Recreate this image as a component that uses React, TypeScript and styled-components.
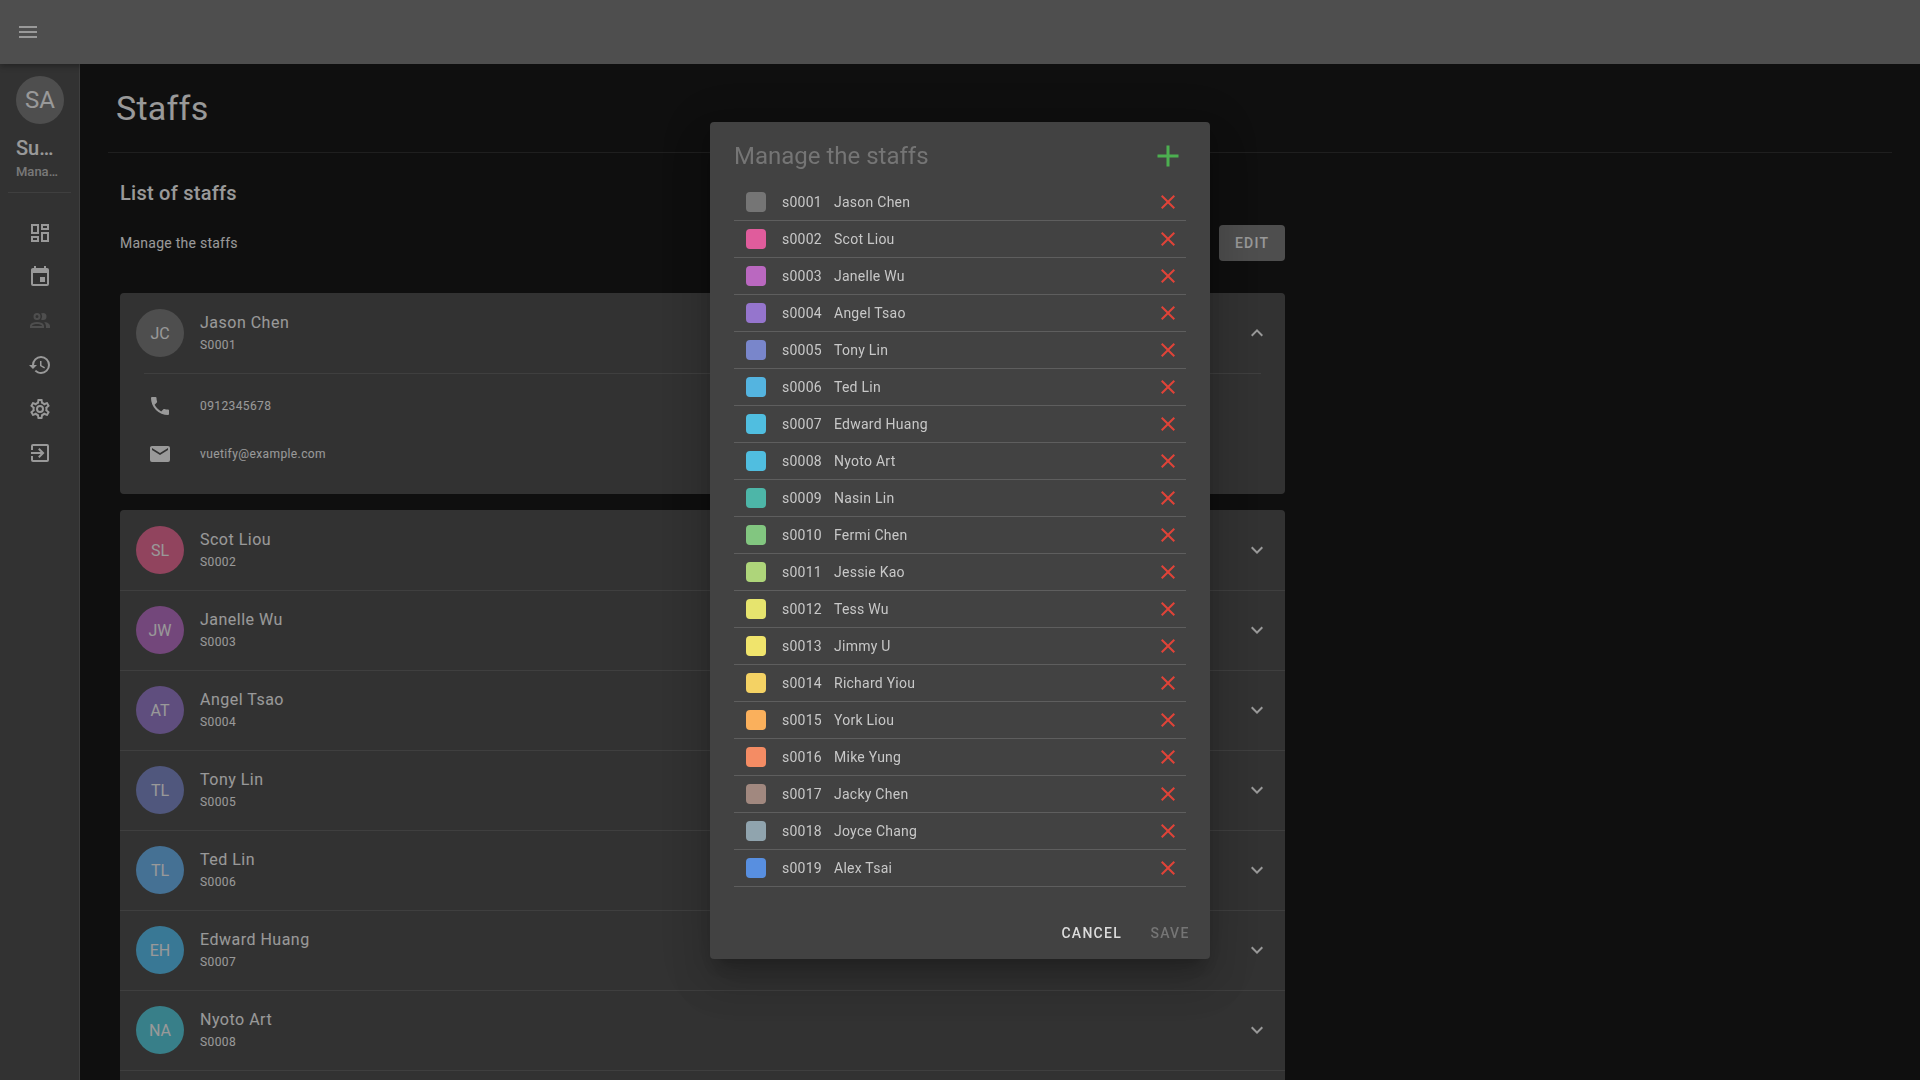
import React from "react";
import styled, { createGlobalStyle } from "styled-components";

const GlobalStyle = createGlobalStyle`
  *, *::before, *::after { box-sizing: border-box; }
  body {
    margin: 0;
    background: #000;
    color: #fff;
    font-family: Roboto, "Noto Sans", sans-serif;
    font-size: 16px;
    line-height: 24px;
  }
  h1, h2, h3, p, ul { margin: 0; padding: 0; }
  ul { list-style: none; }
  button { font-family: inherit; border: 0; background: none; padding: 0; color: inherit; cursor: pointer; }
  a { color: inherit; text-decoration: none; }
`;

const ICONS = {
  menu: "M3 6h18v2H3V6m0 5h18v2H3v-2m0 5h18v2H3v-2z",
  dashboard:
    "M19 5v2h-4V5h4M9 5v6H5V5h4m10 8v6h-4v-6h4M9 17v2H5v-2h4M21 3h-8v6h8V3M11 3H3v10h8V3m10 8h-8v10h8V11m-10 4H3v6h8v-6z",
  calendar:
    "M19 19H5V8h14m-3-7v2H8V1H6v2H5c-1.11 0-2 .89-2 2v14a2 2 0 0 0 2 2h14a2 2 0 0 0 2-2V5a2 2 0 0 0-2-2h-1V1m-1 11h-5v5h5v-5z",
  people:
    "M13.07 10.41a5 5 0 0 0 0-5.82A3.39 3.39 0 0 1 15 4a3.5 3.5 0 0 1 0 7 3.39 3.39 0 0 1-1.93-.59M5.5 7.5A3.5 3.5 0 1 1 9 11a3.5 3.5 0 0 1-3.5-3.5m2 0A1.5 1.5 0 1 0 9 6a1.5 1.5 0 0 0-1.5 1.5M16 17v2H2v-2s0-4 7-4 7 4 7 4m-2 0c-.14-.78-1.33-2-5-2s-4.93 1.31-5 2m11.95-4A5.32 5.32 0 0 1 18 17v2h4v-2s0-3.63-6.06-4z",
  history:
    "M13.5 8H12v5l4.28 2.54.72-1.21-3.5-2.08V8M13 3a9 9 0 0 0-9 9H1l3.96 4.03L9 12H6a7 7 0 0 1 7-7 7 7 0 0 1 7 7 7 7 0 0 1-7 7c-1.93 0-3.68-.79-4.94-2.06l-1.42 1.42A8.896 8.896 0 0 0 13 21a9 9 0 0 0 9-9 9 9 0 0 0-9-9",
  cog: "M12,8A4,4 0 0,1 16,12A4,4 0 0,1 12,16A4,4 0 0,1 8,12A4,4 0 0,1 12,8M12,10A2,2 0 0,0 10,12A2,2 0 0,0 12,14A2,2 0 0,0 14,12A2,2 0 0,0 12,10M10,22C9.75,22 9.54,21.82 9.5,21.58L9.13,18.93C8.5,18.68 7.96,18.34 7.44,17.94L4.95,18.95C4.73,19.03 4.46,18.95 4.34,18.73L2.34,15.27C2.21,15.05 2.27,14.78 2.46,14.63L4.57,12.97L4.5,12L4.57,11L2.46,9.37C2.27,9.22 2.21,8.95 2.34,8.73L4.34,5.27C4.46,5.05 4.73,4.96 4.95,5.05L7.44,6.05C7.96,5.66 8.5,5.32 9.13,5.07L9.5,2.42C9.54,2.18 9.75,2 10,2H14C14.25,2 14.46,2.18 14.5,2.42L14.87,5.07C15.5,5.32 16.04,5.66 16.56,6.05L19.05,5.05C19.27,4.96 19.54,5.05 19.66,5.27L21.66,8.73C21.79,8.95 21.73,9.22 21.54,9.37L19.43,11L19.5,12L19.43,13L21.54,14.63C21.73,14.78 21.79,15.05 21.66,15.27L19.66,18.73C19.54,18.95 19.27,19.04 19.05,18.95L16.56,17.95C16.04,18.34 15.5,18.68 14.87,18.93L14.5,21.58C14.46,21.82 14.25,22 14,22H10M11.25,4L10.88,6.61C9.68,6.86 8.62,7.5 7.85,8.39L5.44,7.35L4.69,8.65L6.8,10.2C6.4,11.37 6.4,12.64 6.8,13.8L4.68,15.36L5.43,16.66L7.86,15.62C8.63,16.5 9.68,17.14 10.87,17.38L11.24,20H12.76L13.13,17.39C14.32,17.14 15.37,16.5 16.14,15.62L18.57,16.66L19.32,15.36L17.2,13.81C17.6,12.64 17.6,11.37 17.2,10.2L19.31,8.65L18.56,7.35L16.15,8.39C15.38,7.5 14.32,6.86 13.12,6.62L12.75,4H11.25Z",
  exit: "M19 3H5a2 2 0 0 0-2 2v4h2V5h14v14H5v-4H3v4a2 2 0 0 0 2 2h14a2 2 0 0 0 2-2V5a2 2 0 0 0-2-2m-8.92 12.58L11.5 17l5-5-5-5-1.42 1.41L12.67 11H3v2h9.67z",
  phone:
    "M6.62 10.79c1.44 2.83 3.76 5.15 6.59 6.59l2.2-2.2c.28-.28.67-.36 1.02-.25 1.12.37 2.32.57 3.57.57a1 1 0 0 1 1 1V20a1 1 0 0 1-1 1A17 17 0 0 1 3 4a1 1 0 0 1 1-1h3.5a1 1 0 0 1 1 1c0 1.25.2 2.45.57 3.57.11.35.03.74-.25 1.02l-2.2 2.2z",
  email:
    "M20 8l-8 5-8-5V6l8 5 8-5m0-2H4c-1.11 0-2 .89-2 2v12a2 2 0 0 0 2 2h16a2 2 0 0 0 2-2V6a2 2 0 0 0-2-2z",
  up: "M7.41 15.41L12 10.83l4.59 4.58L18 14l-6-6-6 6 1.41 1.41z",
  down: "M7.41 8.58L12 13.17l4.59-4.59L18 10l-6 6-6-6 1.41-1.42z",
  plus: "M19 13h-6v6h-2v-6H5v-2h6V5h2v6h6v2z",
  close:
    "M19 6.41L17.59 5 12 10.59 6.41 5 5 6.41 10.59 12 5 17.59 6.41 19 12 13.41 17.59 19 19 17.59 13.41 12 19 6.41z",
};

type IconName = keyof typeof ICONS;

const Svg = styled.svg<{ $size: number }>`
  display: block;
  flex: none;
  width: ${(p) => p.$size}px;
  height: ${(p) => p.$size}px;
  fill: currentColor;
`;

const Icon = ({ name, size = 24 }: { name: IconName; size?: number }) => (
  <Svg viewBox="0 0 24 24" $size={size} aria-hidden="true">
    <path d={ICONS[name]} />
  </Svg>
);

const Screen = styled.div`
  display: flex;
  flex-direction: column;
  height: 100vh;
`;

const AppBar = styled.header`
  display: flex;
  align-items: center;
  flex: none;
  height: 64px;
  padding: 0 16px;
  background: #757575;
  box-shadow: 0 2px 4px -1px rgba(0, 0, 0, 0.2), 0 4px 5px rgba(0, 0, 0, 0.14),
    0 1px 10px rgba(0, 0, 0, 0.12);
  z-index: 1;
`;

const Body = styled.div`
  display: flex;
  flex: 1;
  min-height: 0;
`;

const Rail = styled.nav`
  flex: none;
  width: 80px;
  padding-top: 12px;
  background: #424242;
  border-right: 1px solid #5a5a5a;
`;

const Profile = styled.div`
  display: flex;
  flex-direction: column;
  padding: 0 16px;
`;

const RailDivider = styled.hr`
  height: 1px;
  margin: 10px 8px 18px;
  border: 0;
  background: #5a5a5a;
`;

const Clipped = styled.span<{ $lead?: boolean }>`
  overflow: hidden;
  text-overflow: ellipsis;
  white-space: nowrap;
  font-size: ${(p) => (p.$lead ? 20 : 13)}px;
  font-weight: 500;
  line-height: ${(p) => (p.$lead ? 24 : 20)}px;
  margin-top: ${(p) => (p.$lead ? 12 : 2)}px;
  color: ${(p) => (p.$lead ? "#fff" : "rgba(255,255,255,0.7)")};
`;

const Avatar = styled.span<{ $color: string; $large?: boolean }>`
  display: flex;
  align-items: center;
  justify-content: center;
  flex: none;
  width: 48px;
  height: 48px;
  border-radius: 50%;
  background: ${(p) => p.$color};
  font-size: ${(p) => (p.$large ? 24 : 16)}px;
`;

const NavLink = styled.a<{ $active?: boolean }>`
  display: flex;
  align-items: center;
  justify-content: center;
  height: 44px;
  color: ${(p) => (p.$active ? "#757575" : "#fff")};
`;

const Main = styled.main`
  flex: 1;
  min-width: 0;
  padding: 12px 28px;
  overflow-y: auto;
  scrollbar-width: none;
`;

const PageTitle = styled.h1`
  padding: 12px 8px 24px;
  border-bottom: 1px solid rgba(255, 255, 255, 0.12);
  font-size: 34px;
  font-weight: 400;
  line-height: 40px;
  letter-spacing: 0.007em;
`;

const Column = styled.section`
  width: 66.6667%;
  padding: 24px 12px;
`;

const SectionTitle = styled.h2`
  font-size: 20px;
  font-weight: 500;
  line-height: 32px;
  letter-spacing: 0.0125em;
`;

const SectionBar = styled.div`
  display: flex;
  align-items: center;
  justify-content: space-between;
  margin: 16px 0 32px;
  font-size: 14px;
  letter-spacing: 0.018em;
`;

const EditButton = styled.button`
  height: 36px;
  padding: 0 16px;
  border-radius: 4px;
  background: #757575;
  font-size: 14px;
  font-weight: 500;
  letter-spacing: 0.09em;
`;

const Card = styled.div`
  background: #424242;
  border-radius: 4px;
  overflow: hidden;
  margin-bottom: 16px;
`;

const StaffHeader = styled.button<{ $line?: boolean }>`
  display: flex;
  align-items: center;
  gap: 16px;
  width: 100%;
  height: 80px;
  padding: 0 16px;
  text-align: left;
  box-shadow: ${(p) => (p.$line ? "inset 0 1px #5a5a5a" : "none")};
`;

const Names = styled.span`
  display: flex;
  flex-direction: column;
  flex: 1;
`;

const Name = styled.span`
  font-size: 16px;
  line-height: 24px;
  letter-spacing: 0.031em;
`;

const Code = styled.span`
  font-size: 12px;
  line-height: 20px;
  letter-spacing: 0.033em;
`;

const Contacts = styled.ul`
  margin: 0 24px;
  padding: 8px 0 16px;
  border-top: 1px solid #5a5a5a;
`;

const Contact = styled.li`
  display: flex;
  align-items: center;
  gap: 28px;
  height: 48px;
  padding: 0 4px;
  font-size: 12px;
  letter-spacing: 0.033em;
`;

const Overlay = styled.div`
  position: fixed;
  inset: 0;
  z-index: 2;
  display: flex;
  align-items: center;
  justify-content: center;
  background: rgba(33, 33, 33, 0.46);
`;

const Dialog = styled.div`
  width: 500px;
  max-width: 90%;
  border-radius: 4px;
  background: #424242;
  box-shadow: 0 11px 15px -7px rgba(0, 0, 0, 0.2), 0 24px 38px 3px rgba(0, 0, 0, 0.14),
    0 9px 46px 8px rgba(0, 0, 0, 0.12);
`;

const DialogHeader = styled.div`
  display: flex;
  align-items: center;
  justify-content: space-between;
  height: 62px;
  padding: 6px 24px 0;
`;

const DialogTitle = styled.h2`
  font-size: 24px;
  font-weight: 400;
  line-height: 32px;
  color: #757575;
`;

const AddButton = styled.button`
  color: #4caf50;
`;

const StaffList = styled.ul`
  padding: 0 24px 20px;
`;

const StaffRow = styled.li`
  display: grid;
  grid-template-columns: 20px 36px 1fr auto;
  column-gap: 16px;
  align-items: center;
  height: 37px;
  padding: 0 6px 0 12px;
  border-bottom: 1px solid #5e5e5e;
  font-size: 14px;
  line-height: 20px;
  letter-spacing: 0.018em;
  color: #c8c8c8;
`;

const Swatch = styled.span<{ $color: string }>`
  width: 20px;
  height: 20px;
  border-radius: 4px;
  background: ${(p) => p.$color};
`;

const RemoveButton = styled.button`
  color: #e04338;
`;

const Actions = styled.div`
  display: flex;
  justify-content: flex-end;
  align-items: center;
  gap: 8px;
  height: 52px;
  padding: 8px;
`;

const ActionButton = styled.button`
  min-width: 64px;
  height: 36px;
  padding: 0 8px;
  border-radius: 4px;
  font-size: 14px;
  font-weight: 500;
  letter-spacing: 0.09em;
  color: #dcdcdc;
  &:disabled { color: #757575; cursor: default; }
`;

interface Staff {
  id: string;
  name: string;
  color: string;
  swatch: string;
}

const STAFFS: Staff[] = [
  { id: "0001", name: "Jason Chen", color: "#757575", swatch: "#757575" },
  { id: "0002", name: "Scot Liou", color: "#f06292", swatch: "#e05c9c" },
  { id: "0003", name: "Janelle Wu", color: "#ba68c8", swatch: "#ba68c0" },
  { id: "0004", name: "Angel Tsao", color: "#9575cd", swatch: "#9575cd" },
  { id: "0005", name: "Tony Lin", color: "#7986cb", swatch: "#7986cb" },
  { id: "0006", name: "Ted Lin", color: "#64b5f6", swatch: "#54b4e0" },
  { id: "0007", name: "Edward Huang", color: "#4fc3f7", swatch: "#50bee0" },
  { id: "0008", name: "Nyoto Art", color: "#4dd0e1", swatch: "#50bee0" },
  { id: "0009", name: "Nasin Lin", color: "#4db6ac", swatch: "#4db6a8" },
  { id: "0010", name: "Fermi Chen", color: "#81c784", swatch: "#82c680" },
  { id: "0011", name: "Jessie Kao", color: "#aed581", swatch: "#aed57a" },
  { id: "0012", name: "Tess Wu", color: "#dce775", swatch: "#e6e46e" },
  { id: "0013", name: "Jimmy U", color: "#fff176", swatch: "#f0e46c" },
  { id: "0014", name: "Richard Yiou", color: "#ffd54f", swatch: "#f4d264" },
  { id: "0015", name: "York Liou", color: "#ffb74d", swatch: "#fab05c" },
  { id: "0016", name: "Mike Yung", color: "#ff8a65", swatch: "#f48c64" },
  { id: "0017", name: "Jacky Chen", color: "#a1887f", swatch: "#a1887f" },
  { id: "0018", name: "Joyce Chang", color: "#90a4ae", swatch: "#90a4ae" },
  { id: "0019", name: "Alex Tsai", color: "#588fe0", swatch: "#588fe0" },
];

const NAV: { icon: IconName; label: string; active?: boolean }[] = [
  { icon: "dashboard", label: "Dashboard" },
  { icon: "calendar", label: "Calendar" },
  { icon: "people", label: "Staffs", active: true },
  { icon: "history", label: "History" },
  { icon: "cog", label: "Settings" },
  { icon: "exit", label: "Sign out" },
];

const initials = (name: string) =>
  name
    .split(" ")
    .map((part) => part[0])
    .join("");

const StaffPanel = ({ staff, open, line }: { staff: Staff; open?: boolean; line?: boolean }) => (
  <StaffHeader type="button" $line={line} aria-expanded={!!open}>
    <Avatar $color={staff.color}>{initials(staff.name)}</Avatar>
    <Names>
      <Name>{staff.name}</Name>
      <Code>S{staff.id}</Code>
    </Names>
    <Icon name={open ? "up" : "down"} />
  </StaffHeader>
);

export default function App() {
  const [first, ...others] = STAFFS;
  return (
    <>
      <GlobalStyle />
      <Screen>
        <AppBar>
          <button type="button" aria-label="Toggle menu">
            <Icon name="menu" />
          </button>
        </AppBar>
        <Body>
          <Rail>
            <Profile>
              <Avatar $color="#757575" $large>SA</Avatar>
              <Clipped $lead>Super Admin</Clipped>
              <Clipped>Manager</Clipped>
            </Profile>
            <RailDivider />
            {NAV.map((item) => (
              <NavLink key={item.label} href="#" aria-label={item.label} $active={item.active}>
                <Icon name={item.icon} />
              </NavLink>
            ))}
          </Rail>
          <Main>
            <PageTitle>Staffs</PageTitle>
            <Column>
              <SectionTitle>List of staffs</SectionTitle>
              <SectionBar>
                <p>Manage the staffs</p>
                <EditButton type="button">EDIT</EditButton>
              </SectionBar>
              <Card>
                <StaffPanel staff={first} open />
                <Contacts>
                  <Contact>
                    <Icon name="phone" />
                    0912345678
                  </Contact>
                  <Contact>
                    <Icon name="email" />
                    vuetify@example.com
                  </Contact>
                </Contacts>
              </Card>
              <Card>
                {others.map((staff, index) => (
                  <StaffPanel key={staff.id} staff={staff} line={index > 0} />
                ))}
              </Card>
            </Column>
          </Main>
        </Body>
      </Screen>
      <Overlay>
        <Dialog role="dialog" aria-modal="true" aria-labelledby="dialog-title">
          <DialogHeader>
            <DialogTitle id="dialog-title">Manage the staffs</DialogTitle>
            <AddButton type="button" aria-label="Add staff">
              <Icon name="plus" size={36} />
            </AddButton>
          </DialogHeader>
          <StaffList>
            {STAFFS.map((staff) => (
              <StaffRow key={staff.id}>
                <Swatch $color={staff.swatch} />
                <span>s{staff.id}</span>
                <span>{staff.name}</span>
                <RemoveButton type="button" aria-label={`Remove ${staff.name}`}>
                  <Icon name="close" />
                </RemoveButton>
              </StaffRow>
            ))}
          </StaffList>
          <Actions>
            <ActionButton type="button">CANCEL</ActionButton>
            <ActionButton type="button" disabled>SAVE</ActionButton>
          </Actions>
        </Dialog>
      </Overlay>
    </>
  );
}
